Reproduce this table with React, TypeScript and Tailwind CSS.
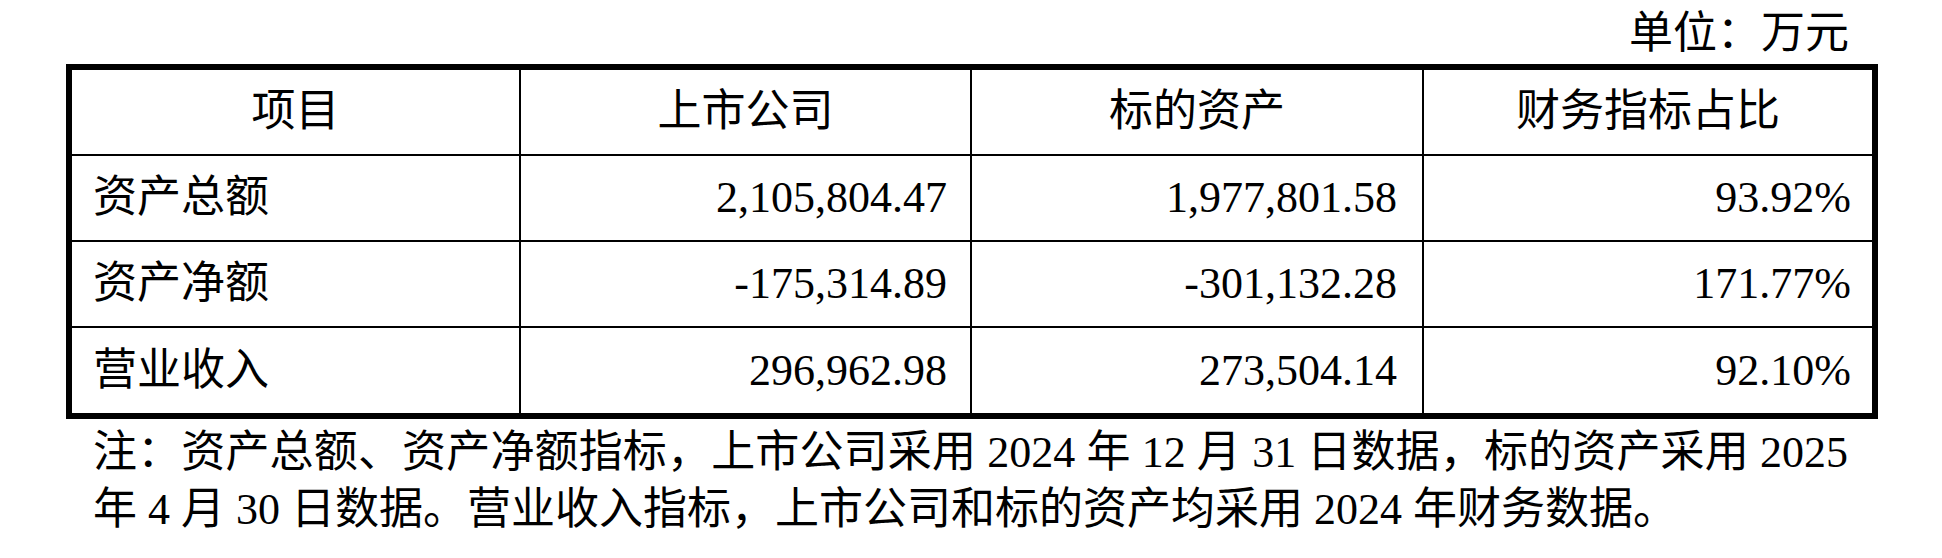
import React from "react";

const rows = [
  ["资产总额", "2,105,804.47", "1,977,801.58", "93.92%"],
  ["资产净额", "-175,314.89", "-301,132.28", "171.77%"],
  ["营业收入", "296,962.98", "273,504.14", "92.10%"],
];

export default function App() {
  return (
    <div className="w-[1942px] h-[558px] bg-white text-black text-[44px] pl-[66px] font-['Liberation_Serif','Noto_Sans_CJK_SC',serif]">
      <div className="w-[1812px]">
        <div className="h-[64px] pt-[4px] leading-[60px] text-right pr-[29px]">单位：万元</div>
        <div className="border-[6px] border-black">
          <div className="grid grid-cols-[449px_451px_452px_448px] h-[86px] border-b-2 border-black">
            <div className="border-r-2 border-black flex items-center justify-center">项目</div>
            <div className="border-r-2 border-black flex items-center justify-center">上市公司</div>
            <div className="border-r-2 border-black flex items-center justify-center">标的资产</div>
            <div className="flex items-center justify-center">财务指标占比</div>
          </div>
          {rows.map((r, i) => (
            <div
              key={r[0]}
              className={
                i < 2
                  ? "grid grid-cols-[449px_451px_452px_448px] h-[86px] border-b-2 border-black"
                  : "grid grid-cols-[449px_451px_452px_448px] h-[85px]"
              }
            >
              <div className="border-r-2 border-black flex items-center pl-[21px]">{r[0]}</div>
              <div className="border-r-2 border-black flex items-center justify-end pr-[23px]">{r[1]}</div>
              <div className="border-r-2 border-black flex items-center justify-end pr-[25px]">{r[2]}</div>
              <div className="flex items-center justify-end pr-[21px]">{r[3]}</div>
            </div>
          ))}
        </div>
        <div className="mt-[5px] pl-[27px] w-[1782px] leading-[57px]">
          <div className="text-justify [text-align-last:justify]">
            注：资产总额、资产净额指标，上市公司采用 2024 年 12 月 31 日数据，标的资产采用 2025
          </div>
          <div>年 4 月 30 日数据。营业收入指标，上市公司和标的资产均采用 2024 年财务数据。</div>
        </div>
      </div>
    </div>
  );
}
